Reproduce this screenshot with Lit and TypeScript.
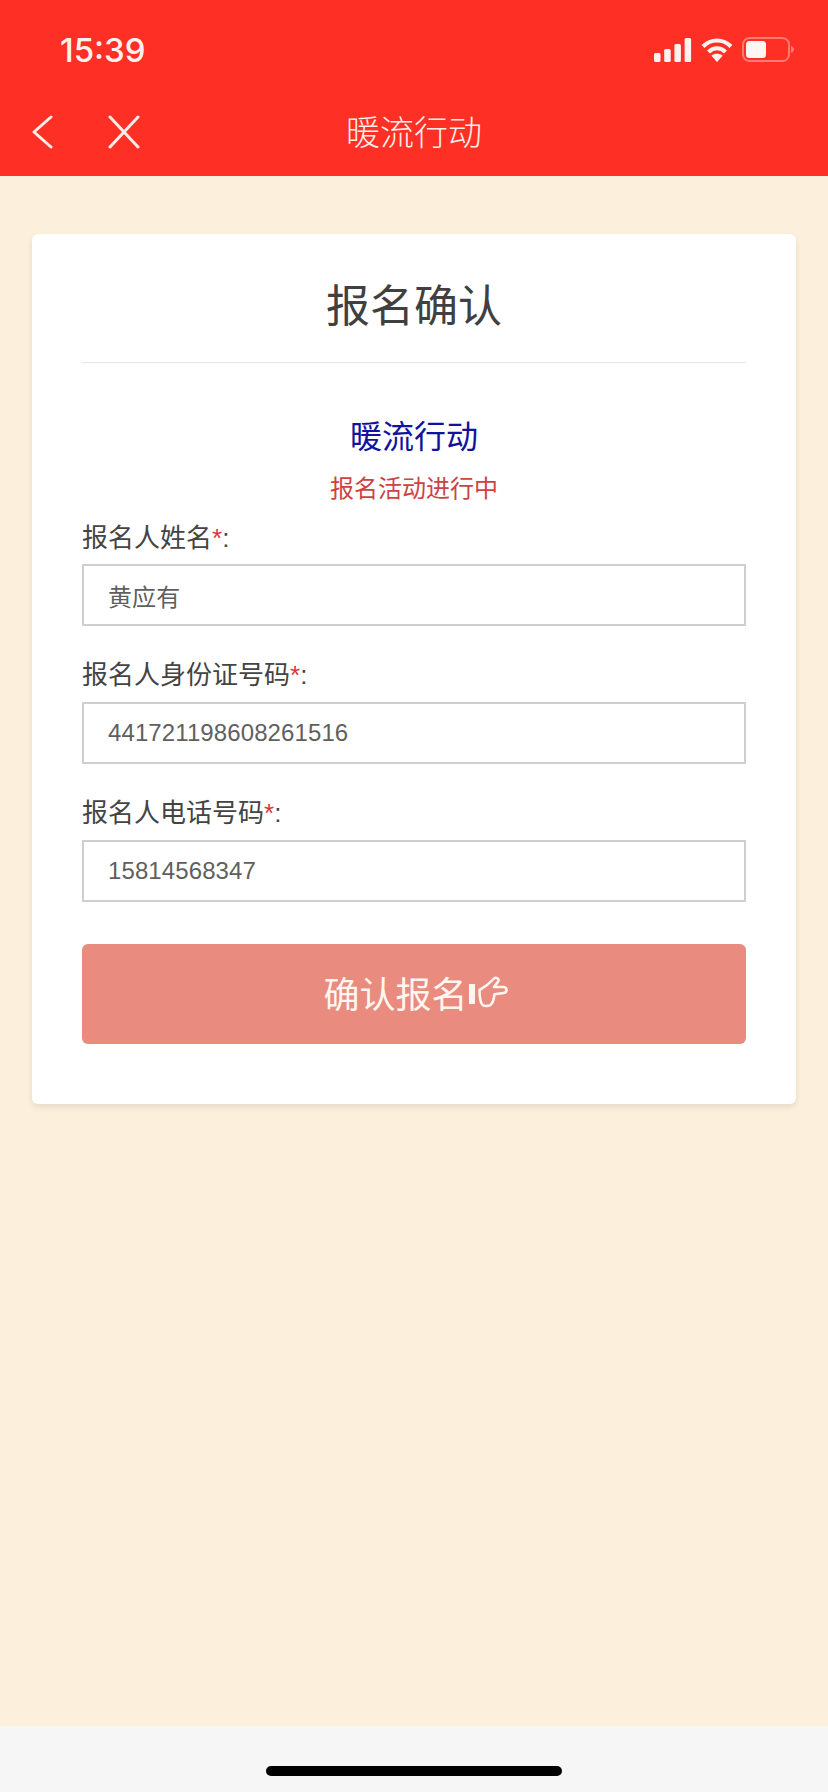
import { LitElement, html, css } from "lit";
import { customElement } from "lit/decorators.js";

const FIELDS = [
  { label: "报名人姓名", value: "黄应有" },
  { label: "报名人身份证号码", value: "441721198608261516" },
  { label: "报名人电话号码", value: "15814568347" },
];

@customElement("app-root")
export class AppRoot extends LitElement {
  static styles = css`
    :host {
      display: flex;
      flex-direction: column;
      height: 1792px;
      width: 828px;
      background: #fcefdc;
      font-family: "Liberation Sans", "Noto Sans CJK SC", sans-serif;
      color: #333;
    }
    .top { background: #fe3025; color: #fff; height: 176px; flex: none; }
    .status {
      height: 88px;
      box-sizing: border-box;
      padding: 34px 33px 0 60px;
      display: flex;
      justify-content: space-between;
      align-items: flex-start;
    }
    .time {
      font-family: "Inter", "Liberation Sans", sans-serif;
      font-size: 33px;
      line-height: 32px;
      font-weight: 500;
      color: #fff2ee;
    }
    .sys { display: flex; align-items: center; gap: 9px; margin-top: 3px; }
    .sys svg { display: block; }
    .nav {
      height: 88px;
      display: grid;
      grid-template-columns: 1fr auto 1fr;
      align-items: center;
    }
    .nav-left { display: flex; align-items: center; gap: 54px; padding-left: 31px; }
    .nav-left svg { display: block; }
    .nav-title { font-size: 34px; line-height: 40px; padding-top: 2px; color: #ffeee8; font-weight: 300; }
    main { flex: 1; padding: 58px 32px 0; min-height: 0; }
    .card {
      background: #fff;
      border-radius: 6px;
      box-shadow: 0 3px 6px rgba(0, 0, 0, 0.09);
      padding: 0 50px 60px;
    }
    h1 {
      margin: 0;
      height: 129px;
      box-sizing: border-box;
      padding-top: 41px;
      border-bottom: 1px solid #e6e6e6;
      font-size: 44px;
      line-height: 64px;
      font-weight: 400;
      text-align: center;
      color: #404040;
    }
    .sub {
      margin-top: 55px;
      text-align: center;
      font-size: 32px;
      line-height: 38px;
      color: #12129c;
    }
    .state {
      margin-top: 17px;
      text-align: center;
      font-size: 24px;
      line-height: 32px;
      color: #cb4442;
    }
    .field { margin-top: 31px; }
    .field.first { margin-top: 15px; }
    .field.first input { margin-top: 8px; }
    label { display: block; font-size: 26px; line-height: 36px; color: #444; }
    label i { font-style: normal; color: #d9363e; }
    input {
      display: block;
      margin-top: 9px;
      width: 100%;
      height: 62px;
      box-sizing: border-box;
      border: 2px solid #cfcfcf;
      border-radius: 0;
      padding: 0 24px;
      background: #fff;
      color: #5f5f5f;
      outline: none;
      letter-spacing: 0.1px;
      font: 24px "Liberation Sans", "Noto Sans CJK SC", sans-serif;
    }
    button {
      margin-top: 42px;
      width: 100%;
      height: 100px;
      border: 0;
      border-radius: 6px;
      background: #e98b7e;
      color: #fff6f0;
      display: flex;
      align-items: center;
      justify-content: center;
      gap: 1px;
      font: 36px "Liberation Sans", "Noto Sans CJK SC", sans-serif;
      padding: 0 0 4px 3px;
    }
    button svg { display: block; flex: none; }
    .bottom {
      height: 66px;
      flex: none;
      background: #f6f6f6;
      display: flex;
      justify-content: center;
      padding-top: 40px;
      box-sizing: border-box;
    }
    .home { width: 296px; height: 10px; border-radius: 5px; background: #000; }
  `;

  render() {
    return html`
      <header class="top">
        <div class="status">
          <span class="time">15:39</span>
          <div class="sys">
            <svg width="38" height="24" viewBox="0 0 38 24" fill="#fff3f0">
              <rect x="0" y="15" width="6.5" height="9" rx="1.5" />
              <rect x="10.2" y="11" width="6.500" height="13" rx="1.5" />
              <rect x="20.4" y="6" width="6.500" height="18" rx="1.5" />
              <rect x="30.6" y="0" width="6.500" height="24" rx="1.5" />
            </svg>
            <svg width="32" height="25" viewBox="0 0 32 25" fill="none" stroke="#fff3f0" stroke-width="4.2">
              <path d="M2 9.5C10 1.500 22 1.500 30 9.5" />
              <path d="M7.5 15C12.5 10 19.5 10 24.5 15" />
              <path d="M16 25l-5.600-6.200c3-2.600 8.200-2.600 11.200 0z" fill="#fff3f0" stroke="none" />
            </svg>
            <svg width="53" height="25" viewBox="0 0 53 25">
              <rect x="1" y="1" width="46" height="23" rx="6.5" fill="none" stroke="#ff7a70" stroke-width="2" />
              <rect x="4" y="4" width="20" height="17" rx="3.5" fill="#fff6f2" />
              <path d="M49 9v7c2-.6 3-2 3-3.500S51 9.600 49 9z" fill="#ff7a70" />
            </svg>
          </div>
        </div>
        <div class="nav">
          <div class="nav-left">
            <svg width="22" height="34" viewBox="0 0 22 34" fill="none" stroke="#ffeee8" stroke-width="3" stroke-linecap="round" stroke-linejoin="round">
              <path d="M20 2L3 17l17 15" />
            </svg>
            <svg width="34" height="34" viewBox="0 0 34 34" fill="none" stroke="#ffeee8" stroke-width="3" stroke-linecap="round">
              <path d="M3 2l28 30M31 2L3 32" />
            </svg>
          </div>
          <div class="nav-title">暖流行动</div>
          <div></div>
        </div>
      </header>
      <main>
        <section class="card">
          <h1>报名确认</h1>
          <div class="sub">暖流行动</div>
          <div class="state">报名活动进行中</div>
          ${FIELDS.map(
            (f, i) => html`
              <div class="field ${i === 0 ? "first" : ""}">
                <label>${f.label}<i>*</i>:</label>
                <input type="text" .value=${f.value} />
              </div>
            `
          )}
          <button type="button">
            确认报名
            <svg width="39" height="32" viewBox="0 0 39 32">
              <rect x="0" y="8" width="6" height="20" fill="#fff6f0" />
              <path
                d="M10.500 14C14 12 21 7 25 2.500c1.500-1.500 5-.3 4.500 2.500L25 11l9.500 0c4 .3 4 5.500 0 6l-9 1.200C25 23 24 27 21.500 29c-2 1.300-6 1.300-8 0C11 26 10.500 21 10.500 14z"
                fill="none"
                stroke="#fff6f0"
                stroke-width="2.600"
                stroke-linejoin="round"
              />
            </svg>
          </button>
        </section>
      </main>
      <footer class="bottom"><div class="home"></div></footer>
    `;
  }
}
